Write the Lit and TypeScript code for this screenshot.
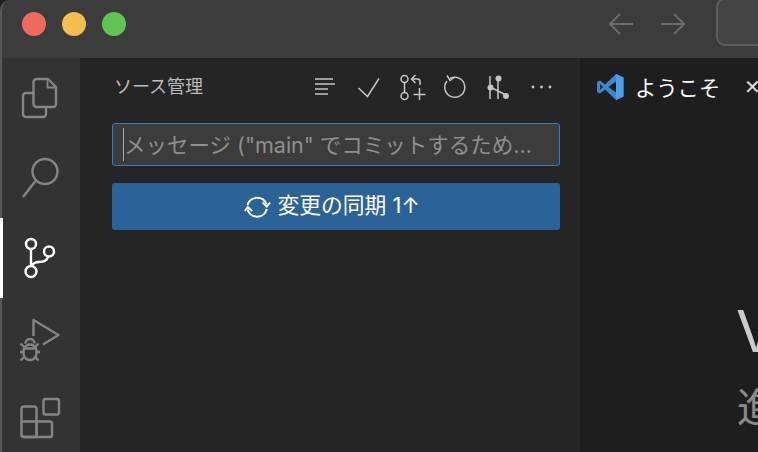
import { LitElement, html, css } from "lit";
import { customElement } from "lit/decorators.js";

@customElement("app-root")
export class AppRoot extends LitElement {
  static styles = css`
    :host {
      display: flex;
      flex-direction: column;
      position: relative;
      width: 758px;
      height: 452px;
      overflow: hidden;
      background: #1e1e1e;
      font-family: "Inter", "Noto Sans CJK JP", sans-serif;
      box-sizing: border-box;
    }
    svg { display: block; flex: none; }
    .title {
      height: 58px;
      flex: none;
      box-sizing: border-box;
      display: flex;
      align-items: flex-start;
      background: #3c3c3c;
      border-left: 2px solid #585858;
      border-top-left-radius: 10px;
      padding-left: 20px;
    }
    .lights { display: flex; gap: 16px; padding-top: 12px; }
    .light { width: 24px; height: 24px; border-radius: 50%; }
    .nav { margin-left: 482px; margin-top: 12px; display: flex; gap: 26px; }
    .cmd {
      margin-left: 30px;
      margin-top: -2px;
      width: 120px;
      flex: none;
      height: 48px;
      box-sizing: border-box;
      border: 2px solid #5e5e5e;
      border-radius: 9px;
      background: #444;
    }
    .body { flex: 1; display: flex; min-height: 0; }
    .activity {
      width: 80px;
      flex: none;
      box-sizing: border-box;
      background: #333333;
      border-left: 2px solid #585858;
    }
    .sidebar {
      width: 500px;
      flex: none;
      box-sizing: border-box;
      background: #252526;
      padding: 0 20px 0 32px;
      display: flex;
      flex-direction: column;
    }
    .head {
      height: 65px;
      display: flex;
      align-items: flex-start;
    }
    .head-title {
      margin: 17px 0 0 2px;
      font-size: 18px;
      line-height: 24px;
      color: #bbbbbb;
      white-space: nowrap;
    }
    .input {
      height: 43px;
      box-sizing: border-box;
      border: 1px solid #2f7fc8;
      border-radius: 3px;
      background: #3c3c3c;
      display: flex;
      align-items: center;
      padding: 0 0 2px 10px;
      color: #8f8f8f;
      font-size: 21.5px;
      white-space: nowrap;
      overflow: hidden;
    }
    .caret { width: 1px; height: 33px; background: #a8a8a8; margin: 2px 0 0 0; flex: none; }
    .sync {
      margin-top: 17px;
      height: 47px;
      border-radius: 3px;
      background: #2b6298;
      color: #ffffff;
      display: flex;
      align-items: center;
      justify-content: center;
      gap: 6px;
      font-size: 21.8px;
      line-height: 30px;
      white-space: nowrap;
      padding-right: 8px;
    }
    .sync span { margin-top: -3px; }
    .editor { flex: 1; min-width: 0; background: #1e1e1e; overflow: hidden; display: flex; flex-direction: column; }
    .tab {
      display: flex;
      align-items: center;
      height: 58px;
      padding-left: 16px;
      color: #ffffff;
      font-size: 21.3px;
      white-space: nowrap;
      flex: none;
    }
    .tab-label { margin-left: 11px; margin-top: -2px; }
    .tab-x { margin-left: 24px; color: #dddddd; font-size: 20px; }
    .welcome { padding: 180px 0 0 157px; white-space: nowrap; }
    .h1 { font-size: 58px; line-height: 70px; font-weight: 400; color: #cccccc; margin-left: -1px; }
    .h2 { font-size: 40px; line-height: 48px; margin-top: 18px; font-weight: 400; color: #8a8a8a; }
    .overlay { position: absolute; left: 0; top: 0; pointer-events: none; }
  `;

  render() {
    return html`
      <div class="title">
        <div class="lights">
          <div class="light" style="background:#ee6a5f"></div>
          <div class="light" style="background:#f5bd4f"></div>
          <div class="light" style="background:#61c454"></div>
        </div>
        <div class="nav">
          <svg width="26" height="24" viewBox="0 0 26 24" fill="none" stroke="#6c6c6c" stroke-width="2"><path d="M25 12H2M12 2 2 12l10 10"/></svg>
          <svg width="26" height="24" viewBox="0 0 26 24" fill="none" stroke="#6c6c6c" stroke-width="2"><path d="M1 12h23M14 2l10 10-10 10"/></svg>
        </div>
        <div class="cmd"></div>
      </div>
      <div class="body">
        <div class="activity"></div>
        <div class="sidebar">
          <div class="head"><div class="head-title">ソース管理</div></div>
          <div class="input"><span class="caret"></span>メッセージ ("main" でコミットするため...</div>
          <div class="sync">
            <svg width="27" height="24" viewBox="0 0 27 24" fill="none" stroke="#fff" stroke-width="2">
              <path d="M3.500 10A10 10 0 0 1 22.500 9.500M22.800 14A10 10 0 0 1 3.500 14.500"/>
              <path d="M18.500 7.500 22.800 11.500 26 7.500M8 16 3.800 12 .8 16"/>
            </svg>
            <span>変更の同期 1↑</span>
          </div>
        </div>
        <div class="editor">
          <div class="tab">
            <svg width="28" height="28" viewBox="0 0 28 28">
              <path d="M20 1 27.500 4.500V23.500L20 27 9 16.500 4 20.500 1 19V9L4 7.500 9 11.500Z" fill="#3f86d0"/>
              <path d="M20 1 27.500 4.500V23.500L20 27Z" fill="#4a9eea"/>
              <path d="M20 8.500V19.500L12.500 14Z" fill="#1e1e1e"/>
              <path d="M4 11V17L7 14Z" fill="#1e1e1e"/>
            </svg>
            <span class="tab-label">ようこそ</span>
            <span class="tab-x">✕</span>
          </div>
          <div class="welcome">
            <div class="h1">Visual Studio Code</div>
            <div class="h2">進化した編集</div>
          </div>
        </div>
      </div>

      <svg class="overlay" width="758" height="452" viewBox="0 0 758 452" fill="none">
        <g stroke="#858585" stroke-width="2.4" stroke-linejoin="round">
          <path d="M33.500 93H26a3 3 0 0 0-3 3v18a3 3 0 0 0 3 3h17a3 3 0 0 0 3-3v-7"/>
          <path d="M36.500 79H48l8 8v17a3 3 0 0 1-3 3H36.500a3 3 0 0 1-3-3V82a3 3 0 0 1 3-3Z"/>
          <path d="M47.500 79.500v8h8" stroke-width="1.800"/>
          <circle cx="45" cy="171.500" r="12.500"/>
          <path d="M35.500 181 23 197"/>
          <path d="M33.500 336V320L58.500 335 43 344.500"/>
          <path d="M20.500 343.500l4 4M38.500 343.500l-4 4M20 352h4.500M40 352h-4.500M20.500 360.500l4-4M38.500 360.500l-4-4"/>
          <path d="M23.500 351a6.500 6.500 0 0 1 13 0v2.500a6.500 6.500 0 0 1-13 0Z"/>
          <path d="M25 348.500h10M25.500 343.500a4.500 4.500 0 0 1 9 0"/>
          <rect x="21.500" y="406.500" width="15" height="30.500" rx="2.500"/>
          <path d="M21.500 421.500H50a2 2 0 0 1 2 2V435a2 2 0 0 1-2 2H24a2.500 2.500 0 0 1-2.500-2.500M36.500 421.500V437"/>
          <rect x="43.500" y="399" width="15.500" height="15.500" rx="2"/>
        </g>
        <g stroke="#ffffff" stroke-width="2.4">
          <circle cx="31" cy="244" r="5"/>
          <circle cx="49" cy="251.500" r="5"/>
          <circle cx="31" cy="271.500" r="5.500"/>
          <path d="M31 249v17M48 256.500c-1 5-5 5.500-9 5.500-3.500 0-6 1-7 4"/>
        </g>
        <rect x="0" y="218" width="3" height="80" fill="#fff"/>

        <g stroke="#c5c5c5" stroke-width="1.500">
          <path d="M315 79h18M315 84h20M315 89h13M315 94h13"/>
          <path d="M358.500 88 367.500 96.500 379 78.500"/>
          <circle cx="404.500" cy="79" r="3.500"/>
          <circle cx="404.500" cy="96" r="3.500"/>
          <path d="M404.500 82.500v10"/>
          <path d="M420 85v-3.500a2.500 2.500 0 0 0-2.500-2.500H412M415.500 75l-4 4 4 4"/>
          <path d="M419.500 88v12M413.500 94.500h12"/>
          <path d="M450 78.500A10 10 0 1 1 447 81"/>
          <path d="M447 75.500 450 80.500 455 77"/>
          <path d="M490 76v23M498 76v23M491 87.500l14 7"/>
        </g>
        <g fill="#c5c5c5">
          <circle cx="498.500" cy="78.500" r="3"/>
          <circle cx="490.500" cy="87.500" r="3"/>
          <circle cx="506" cy="96" r="3"/>
          <circle cx="533" cy="87" r="1.400"/>
          <circle cx="541.500" cy="87" r="1.400"/>
          <circle cx="550" cy="87" r="1.400"/>
        </g>
      </svg>
    `;
  }
}
